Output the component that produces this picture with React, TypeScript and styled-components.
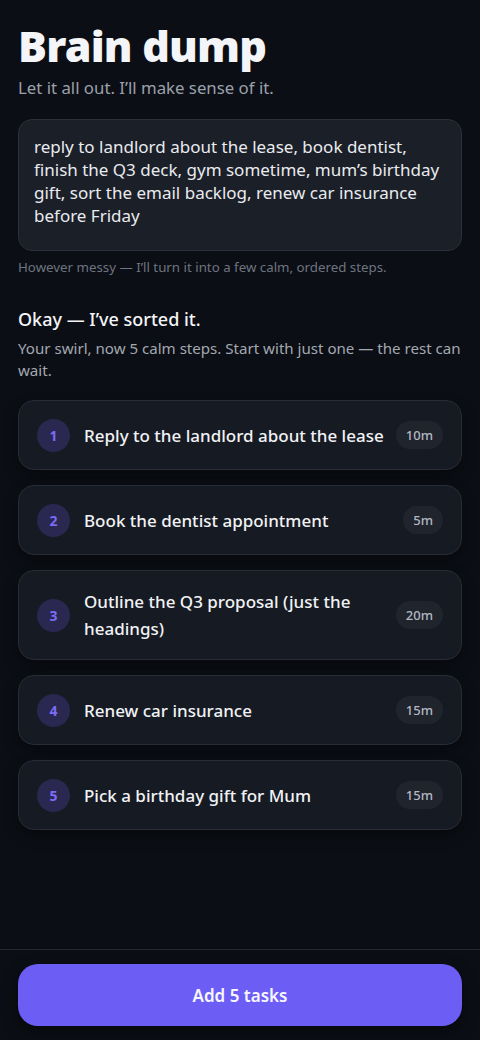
import React from "react";
import styled, { createGlobalStyle } from "styled-components";

const GlobalStyle = createGlobalStyle`
  * { box-sizing: border-box; }
  html, body { margin: 0; padding: 0; background: #0b0e14; }
  body { font-family: "Noto Sans", "Open Sans", sans-serif; color: #eef0f4; }
`;

const Page = styled.div`
  height: 1040px;
  display: flex;
  flex-direction: column;
  background: #0b0e14;
`;

const Main = styled.main`
  flex: 1;
  padding: 20px 18px 0;
  display: flex;
  flex-direction: column;
`;

const Title = styled.h1`
  margin: 0;
  font-size: 43px;
  line-height: 52px;
  font-weight: 900;
  letter-spacing: -0.8px;
  color: #f4f5f8;
`;

const Subtitle = styled.p`
  margin: 5px 0 0;
  font-size: 16.8px;
  line-height: 22px;
  color: #9ba1ab;
`;

const DumpBox = styled.div`
  margin-top: 20px;
  padding: 15px 15px 18px;
  min-height: 132px;
  background: #1b1f28;
  border: 1px solid #2b303a;
  border-radius: 14px;
  font-size: 17px;
  line-height: 23px;
  color: #e9ebef;
`;

const Hint = styled.p`
  margin: 8px 0 0;
  font-size: 13.3px;
  line-height: 17px;
  color: #6e7480;
`;

const SectionTitle = styled.h2`
  margin: 31px 0 0;
  font-size: 18px;
  line-height: 24px;
  font-weight: 500;
  color: #f4f5f8;
`;

const SectionText = styled.p`
  margin: 6px 0 0;
  font-size: 15.1px;
  line-height: 22px;
  color: #a3a8b1;
`;

const Steps = styled.ol`
  list-style: none;
  margin: 19px 0 0;
  padding: 0;
  display: flex;
  flex-direction: column;
  gap: 15px;
`;

const StepCard = styled.li<{ $tall?: boolean }>`
  min-height: ${(p) => (p.$tall ? 90 : 70)}px;
  display: flex;
  align-items: center;
  padding: 0 18px;
  background: #161a22;
  border: 1px solid #272c36;
  border-radius: 16px;
  box-shadow: 0 6px 14px rgba(0, 0, 0, 0.35);
`;

const StepNumber = styled.span`
  flex: none;
  width: 33px;
  height: 33px;
  margin-right: 14px;
  border-radius: 50%;
  background: #2a2850;
  color: #7a6cf6;
  font-size: 14px;
  font-weight: 700;
  display: flex;
  align-items: center;
  justify-content: center;
`;

const StepText = styled.span`
  flex: 1;
  font-size: 17px;
  line-height: 27px;
  font-weight: 500;
  color: #f1f2f5;
`;

const Duration = styled.span`
  flex: none;
  margin-left: 8px;
  padding: 0 10px;
  height: 28px;
  border-radius: 14px;
  background: #20242d;
  color: #b3b8c1;
  font-size: 13px;
  font-weight: 500;
  display: flex;
  align-items: center;
`;

const Footer = styled.footer`
  border-top: 1px solid #242831;
  padding: 14px 18px;
`;

const AddButton = styled.button`
  width: 100%;
  height: 62px;
  border: none;
  border-radius: 20px;
  background: #6c5ef4;
  color: #f7f6ff;
  font-family: inherit;
  font-size: 17px;
  font-weight: 600;
  box-shadow: 0 6px 16px rgba(0, 0, 0, 0.4);
`;

const steps = [
  { text: "Reply to the landlord about the lease", time: "10m" },
  { text: "Book the dentist appointment", time: "5m" },
  { text: "Outline the Q3 proposal (just the headings)", time: "20m", tall: true },
  { text: "Renew car insurance", time: "15m" },
  { text: "Pick a birthday gift for Mum", time: "15m" },
];

export default function App() {
  return (
    <Page>
      <GlobalStyle />
      <Main>
        <Title>Brain dump</Title>
        <Subtitle>Let it all out. I’ll make sense of it.</Subtitle>
        <DumpBox>
          reply to landlord about the lease, book dentist, finish the Q3 deck, gym sometime, mum’s birthday
          gift, sort the email backlog, renew car insurance before Friday
        </DumpBox>
        <Hint>However messy — I’ll turn it into a few calm, ordered steps.</Hint>

        <SectionTitle>Okay — I’ve sorted it.</SectionTitle>
        <SectionText>Your swirl, now 5 calm steps. Start with just one — the rest can wait.</SectionText>

        <Steps>
          {steps.map((step, i) => (
            <StepCard key={i} $tall={step.tall}>
              <StepNumber>{i + 1}</StepNumber>
              <StepText>{step.text}</StepText>
              <Duration>{step.time}</Duration>
            </StepCard>
          ))}
        </Steps>
      </Main>
      <Footer>
        <AddButton>Add 5 tasks</AddButton>
      </Footer>
    </Page>
  );
}
